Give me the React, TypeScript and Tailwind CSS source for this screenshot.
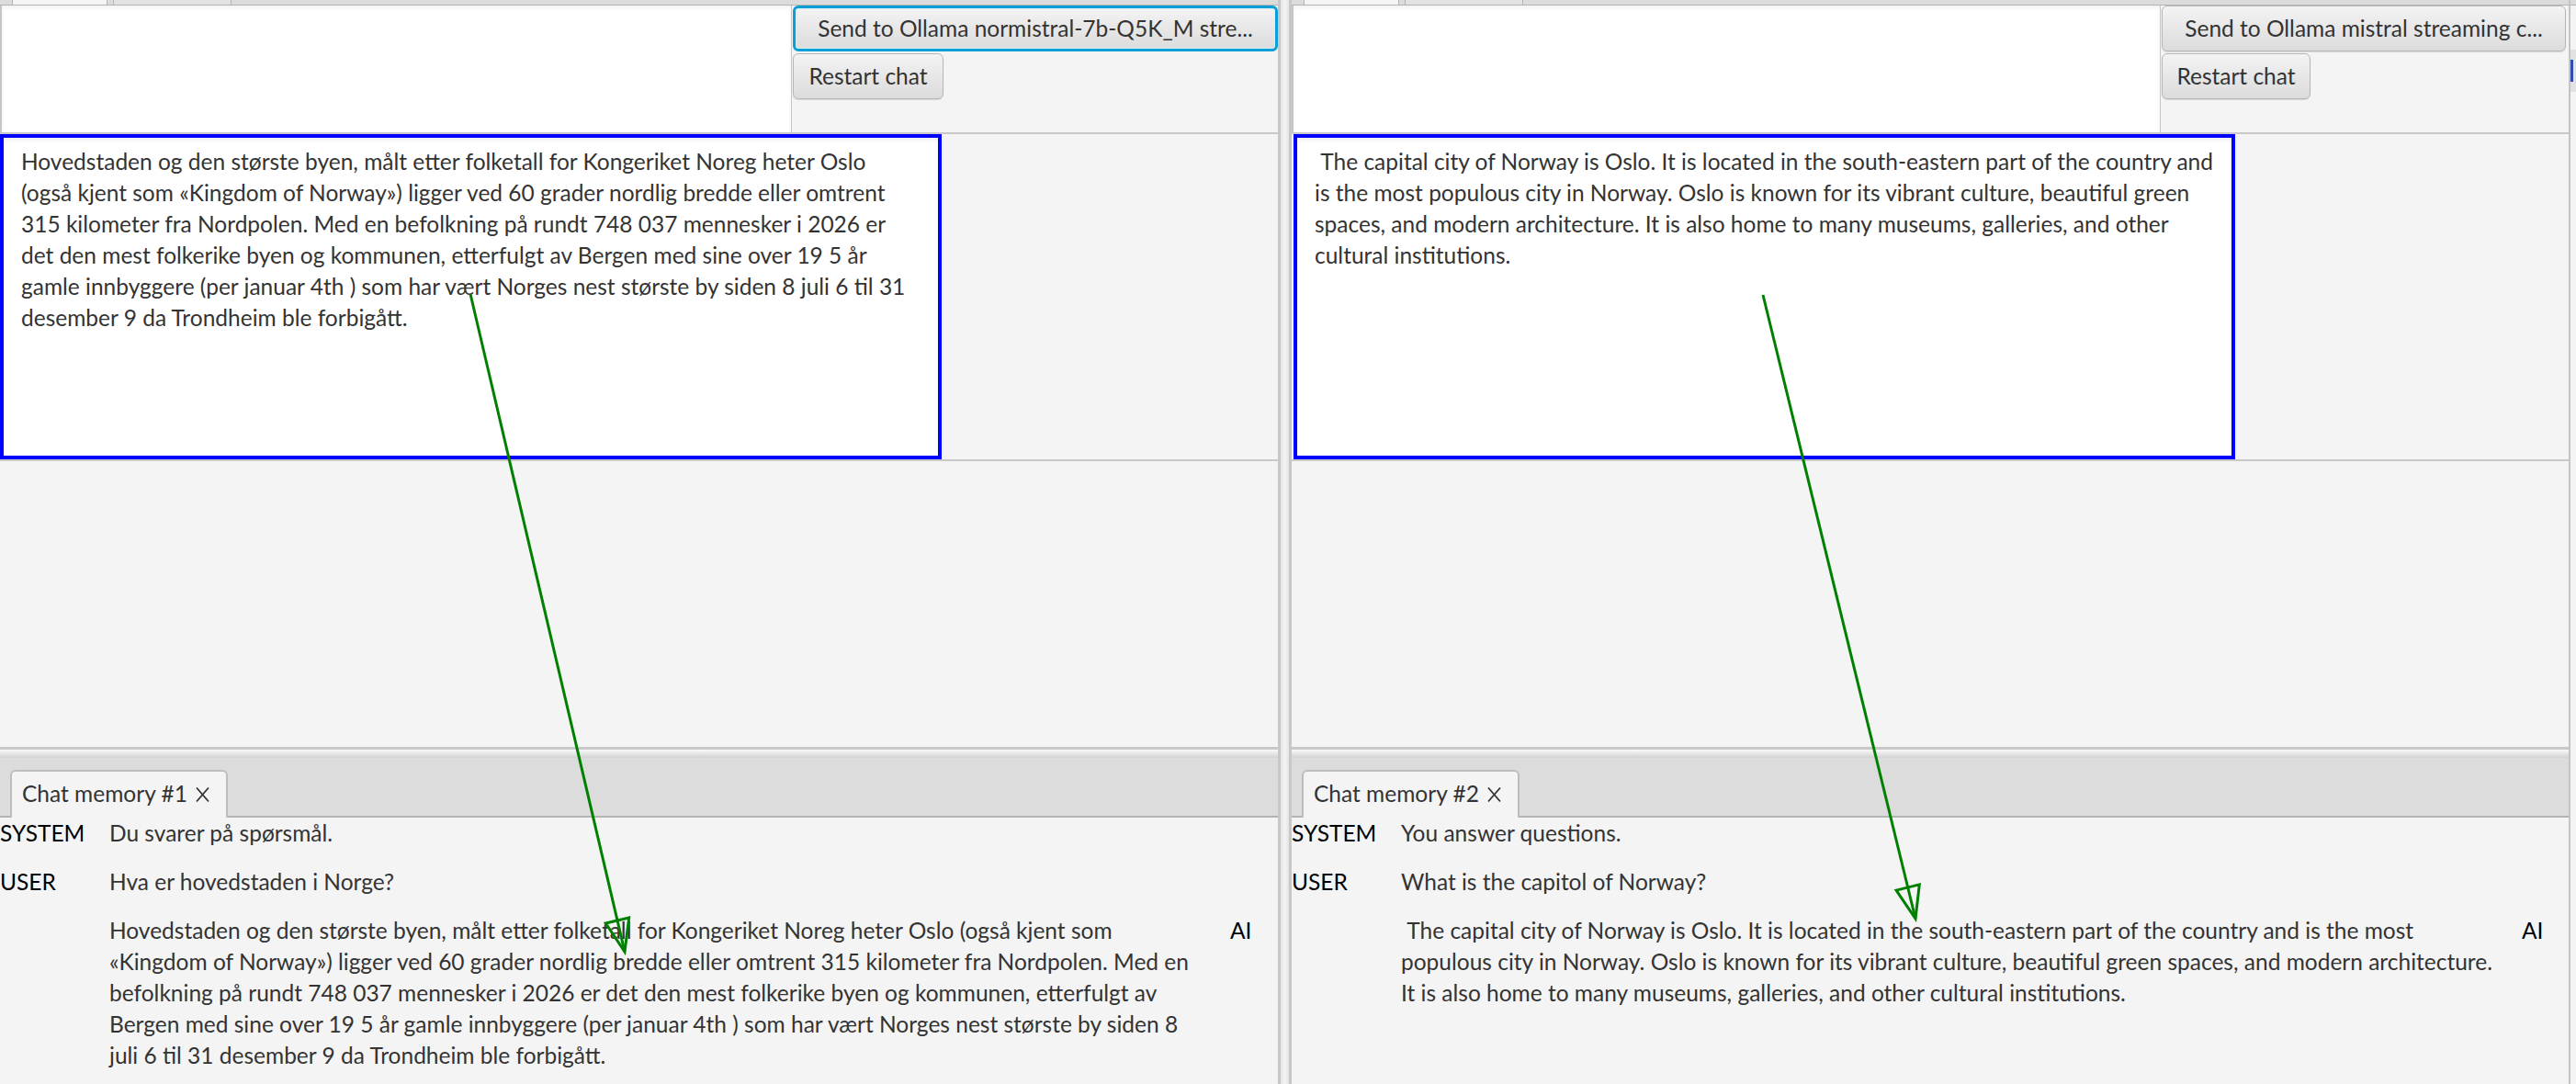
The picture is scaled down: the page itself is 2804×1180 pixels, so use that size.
import React from "react";

const NO_TEXT =
  "Hovedstaden og den største byen, målt etter folketall for Kongeriket Noreg heter Oslo (også kjent som «Kingdom of Norway») ligger ved 60 grader nordlig bredde eller omtrent 315 kilometer fra Nordpolen. Med en befolkning på rundt 748 037 mennesker i 2026 er det den mest folkerike byen og kommunen, etterfulgt av Bergen med sine over 19 5 år gamle innbyggere (per januar 4th ) som har vært Norges nest største by siden 8 juli 6 til 31 desember 9 da Trondheim ble forbigått.";

const EN_TEXT =
  " The capital city of Norway is Oslo. It is located in the south-eastern part of the country and is the most populous city in Norway. Oslo is known for its vibrant culture, beautiful green spaces, and modern architecture. It is also home to many museums, galleries, and other cultural institutions.";

function CloseX() {
  return (
    <svg width="17" height="18" viewBox="0 0 17 18" className="ml-[8px] mt-[2px]">
      <path d="M2 1.5 L15 16.5 M15 1.5 L2 16.5" stroke="#333" strokeWidth="1.8" fill="none" />
    </svg>
  );
}

type PanelProps = {
  textAreaW: string;
  sendW: string;
  restartW: string;
  sendLabel: string;
  focused: boolean;
  answer: string;
  system: string;
  user: string;
  memoryTitle: string;
  boxOffset: string;
  width: string;
};

function Panel(p: PanelProps) {
  return (
    <div className={`flex flex-col shrink-0 ${p.width} h-[1180px] bg-[#f4f4f4]`}>
      {/* top tab strip remnant */}
      <div className="h-[6px] flex bg-[#dcdcdc] border-b border-[#b4b4b4]">
        <div className="ml-[13px] w-[104px] h-full bg-[#f4f4f4] border-x border-[#b4b4b4]" />
        <div className="ml-[6px] w-[129px] h-full bg-[#e2e2e2] border-x border-[#b4b4b4]" />
      </div>
      {/* input row */}
      <div className="h-[138px] flex">
        <div
          className={`${p.textAreaW} h-full bg-white border-l-2 border-r border-[#c6c6c6] shadow-[inset_0_3px_4px_rgba(0,0,0,0.05)]`}
        />
        <div className="flex-1 flex flex-col pl-[1px]">
          <div
            className={`${p.sendW} h-[50px] flex items-center justify-center px-[20px] rounded-[6px] bg-gradient-to-b from-[#f3f3f3] to-[#dcdcdc] ${
              p.focused
                ? "border-[3px] border-[#0a9fd6] shadow-[inset_0_0_0_1px_#d6eef8]"
                : "border border-[#b6b6b6] shadow-[0_1px_1px_rgba(0,0,0,0.12)]"
            } whitespace-nowrap overflow-hidden text-[#333]`}
          >
            {p.sendLabel}
          </div>
          <div
            className={`${p.restartW} mt-[2px] h-[50px] flex items-center justify-center rounded-[6px] bg-gradient-to-b from-[#f3f3f3] to-[#dcdcdc] border border-[#b6b6b6] shadow-[0_1px_1px_rgba(0,0,0,0.12)] whitespace-nowrap text-[#333]`}
          >
            Restart chat
          </div>
        </div>
      </div>
      <div className="h-[2px] bg-[#c8c8c8]" />
      {/* answer row */}
      <div className="h-[354px] flex">
        <div
          className={`${p.boxOffset} w-[1025px] h-full border-4 border-[#0000ff] bg-white px-[19px] pt-[9px] leading-[34px] whitespace-pre-wrap text-[#333] shadow-[inset_0_3px_4px_rgba(0,0,0,0.06)]`}
        >
          {p.answer}
        </div>
      </div>
      <div className="h-[2px] bg-[#c8c8c8]" />
      <div className="h-[311px]" />
      {/* split divider */}
      <div className="h-[12px] border-t-[3px] border-[#c8c8c8] bg-gradient-to-b from-[#fafafa] to-[#d2d2d2]" />
      {/* memory tab header */}
      <div className="h-[65px] flex items-end bg-[#dcdcdc] border-b-2 border-[#b4b4b4] pl-[11px]">
        <div className="w-[237px] h-[52px] -mb-[2px] bg-[#f4f4f4] border-2 border-b-0 border-[#bdbdbd] rounded-t-[6px] flex items-center pl-[11px] pb-[2px] text-[#333] whitespace-nowrap">
          {p.memoryTitle}
          <CloseX />
        </div>
      </div>
      {/* memory content */}
      <div className="flex flex-col gap-[19px] leading-[34px]">
        <div className="flex">
          <div className="w-[119px] text-black">SYSTEM</div>
          <div className="w-[1220px] pr-[25px] text-[#333]">{p.system}</div>
        </div>
        <div className="flex">
          <div className="w-[119px] text-black">USER</div>
          <div className="w-[1220px] pr-[25px] text-[#333]">{p.user}</div>
        </div>
        <div className="flex">
          <div className="w-[119px]" />
          <div className="w-[1220px] pr-[25px] text-[#333] whitespace-pre-wrap">{p.answer}</div>
          <div className="text-black">AI</div>
        </div>
      </div>
    </div>
  );
}

export default function App() {
  return (
    <div className="relative w-[2804px] h-[1180px] overflow-hidden flex bg-[#f4f4f4] text-[24.5px] font-['Lato','Noto_Sans',sans-serif]">
      <Panel
        width="w-[1391px]"
        textAreaW="w-[862px]"
        sendW="w-[528px]"
        restartW="w-[164px]"
        sendLabel="Send to Ollama normistral-7b-Q5K_M stre..."
        focused={true}
        answer={NO_TEXT}
        system="Du svarer på spørsmål."
        user="Hva er hovedstaden i Norge?"
        memoryTitle="Chat memory #1"
        boxOffset=""
      />
      {/* vertical split divider */}
      <div className="w-[15px] h-[1180px] shrink-0 border-x-[3px] border-[#c8c8c8] bg-gradient-to-r from-[#e4e4e4] via-[#f4f4f4] to-[#e4e4e4]" />
      <Panel
        width="w-[1390px]"
        textAreaW="w-[946px]"
        sendW="w-[440px]"
        restartW="w-[162px]"
        sendLabel="Send to Ollama mistral streaming c..."
        focused={false}
        answer={EN_TEXT}
        system="You answer questions."
        user="What is the capitol of Norway?"
        memoryTitle="Chat memory #2"
        boxOffset="ml-[2px]"
      />
      {/* next panel edge */}
      <div className="flex-1 h-[1180px] border-l-2 border-[#c4c4c4] bg-[#f4f4f4] flex flex-col">
        <div className="h-[6px] bg-[#dcdcdc] border-b border-[#b4b4b4]" />
        <div className="mt-[48px] h-[46px] bg-[#e2e2e2] flex items-center">
          <div className="w-[3px] h-[24px] bg-[#2f4fb0]" />
        </div>
      </div>
      {/* green annotation arrows */}
      <svg
        className="absolute inset-0 pointer-events-none"
        width="2804"
        height="1180"
        viewBox="0 0 2804 1180"
      >
        <g stroke="#008000" strokeWidth="3" fill="none" strokeLinejoin="miter">
          <line x1="512" y1="320" x2="680" y2="1036" />
          <polygon points="680,1036 684.7,999 659.3,1005" />
          <line x1="1919" y1="321" x2="2085" y2="1000" />
          <polygon points="2085,1000 2089.3,962.9 2064.1,969.1" />
        </g>
      </svg>
    </div>
  );
}
